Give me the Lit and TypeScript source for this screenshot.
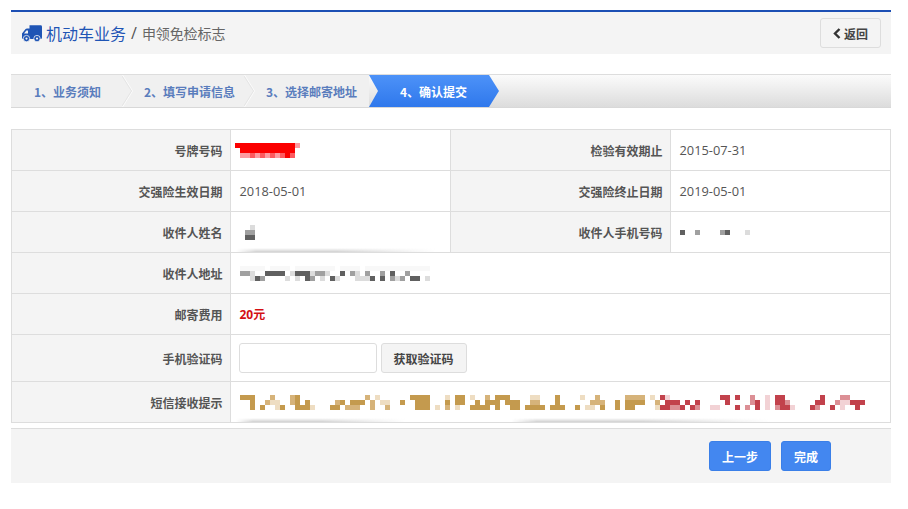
import { LitElement, html, css, svg } from "lit";
import { customElement } from "lit/decorators.js";

const PAL: Record<string, string> = {
  "1": "#c49a4e", "2": "#d6b37a", "3": "#eeddc2",
  a: "#c2424c", b: "#dc8f95", c: "#f2d2d5",
  k: "#606060", m: "#a0a0a0", l: "#dcdcdc", f: "#f8f8f8",
  r: "#fb0000", p: "#fd9aa0", q: "#fd5a5f",
};

function mosaic(rows: string[], extra = "") {
  const w = Math.max(...rows.map((r) => r.length)) * 5;
  const h = rows.length * 5;
  return html`<svg class="mosaic ${extra}" width=${w} height=${h} viewBox="0 0 ${w} ${h}" shape-rendering="crispEdges">
    ${rows.map((r, y) =>
      [...r].map((ch, x) =>
        PAL[ch] ? svg`<rect x=${x * 5} y=${y * 5} width="5" height="5" fill=${PAL[ch]}></rect>` : null
      )
    )}
  </svg>`;
}

const PLATE = ["rrrrrrrrrrrrp", ".rrrrrrrrrrr.", ".lpqpqpqpqrq."].map((s) => s.replace(/l/g, "p"));
const NAME = [".l", "mm", "kk"];
const PHONE = ["k..m....mk...l"];
const ADDRESS = [
  "fffff.ffff.ffffffff.ffff.fffffffffffff",
  "mml..kkkk.lkkklmml..k.ml.m..m.k..m",
  "..lkm....l.l.km.l.kl...lllk.k.mlm.kk.l",
];
const TIP = [
  "111...2...21.............2.3......1111...3" +
    ".11.3..2.111....33...1....3..2.....2222.3.a" +
    "c..........aa.a..b..c.aa.......a...bb",
  "..1..233..21.1.....21.111.2.33..1..111...1" +
    ".11..1.111.111..22...1......222..1.1111..2." +
    "aaa.a.a.....a....ba.c.aab.....aa..bccaaa",
  "..1.1..31..1113...11.222..2..2.....111.3.2" +
    ".3..1111.1..11.1111.111..1.33.1..1.11....3a" +
    "abba.ab..cc...a.b.a.c.baac...ab..a.c..a",
];

const STEPS = ["1、业务须知", "2、填写申请信息", "3、选择邮寄地址"];

@customElement("app-root")
export class AppRoot extends LitElement {
  static styles = css`
    :host {
      display: block;
      width: 908px;
      height: 509px;
      box-sizing: border-box;
      padding: 10px 17px 0 11px;
      background: #fff;
      font-family: "Noto Sans CJK SC", "Open Sans", sans-serif;
      font-size: 12px;
      color: #555;
    }
    .head {
      height: 42px;
      border-top: 2px solid #1c4fb4;
      background: #f4f4f4;
      display: flex;
      align-items: center;
      padding: 0 10px 0 11px;
    }
    .truck { display: block; margin-right: 4px; }
    .title { font-size: 16px; color: #1f55b5; line-height: 20px; }
    .slash { font-size: 16px; color: #555; margin: 0 5px; font-family: "Open Sans", sans-serif; }
    .sub { font-size: 14px; color: #666; letter-spacing: -0.1px; }
    .back {
      margin-left: auto;
      width: 61px;
      height: 30px;
      box-sizing: border-box;
      border: 1px solid #ddd;
      border-radius: 3px;
      background: #f4f4f4;
      display: flex;
      align-items: center;
      justify-content: center;
      gap: 3px;
      font-size: 12px;
      font-weight: 700;
      color: #444;
      padding: 0;
      font-family: inherit;
    }
    .steps {
      margin-top: 20px;
      height: 32px;
      border-top: 1px solid #ddd;
      border-bottom: 1px solid #d8d8d8;
      display: flex;
      background: linear-gradient(#fbfbfb, #dcdcdc);
    }
    .step {
      position: relative;
      box-sizing: border-box;
      background: #f0f0f0;
      color: #5a7dbd;
      font-weight: 700;
      line-height: 34px;
      height: 32px;
      padding-left: 23px;
      width: 112px;
    }
    .step:nth-child(2) { width: 122px; padding-left: 21px; }
    .step:nth-child(3) { width: 124px; padding-left: 21px; }
    .sep { position: absolute; right: -10px; top: 0; z-index: 1; }
    .active {
      width: 130px;
      height: 32px;
      padding-left: 31px;
      line-height: 34px;
      box-sizing: border-box;
      color: #fff;
      font-weight: 700;
      background: linear-gradient(#4d92f8, #2f78ec);
      clip-path: polygon(0 0, 120px 0, 130px 50%, 120px 100%, 0 100%, 9px 50%);
      z-index: 2;
    }
    .steps .tail { flex: 1; }
    table {
      margin-top: 21px;
      width: 879px;
      border-collapse: collapse;
      table-layout: fixed;
      border: 1px solid #ddd;
    }
    col.c1 { width: 218.5px; }
    col.c2, col.c3 { width: 220px; }
    col.c4 { width: 220.5px; }
    tr { height: 41px; }
    tr.tall { height: 47px; }
    td, th { border: 1px solid #ddd; padding: 0; position: relative; }
    th {
      background: #f4f4f4;
      text-align: right;
      padding-right: 7px;
      font-weight: 700;
      color: #555;
      font-size: 12px;
    }
    td { padding-left: 9px; font-family: "Open Sans", "Noto Sans CJK SC", sans-serif; font-size: 12.8px; color: #555; }
    .mosaic { display: block; }
    .plate { margin-left: -5px; }
    .name { margin-left: 5px; }
    .phone { margin-top: 1px; }
    .tip { margin-top: 1px; }
    .fee { color: #d40f14; font-weight: 700; font-size: 12px; font-family: "Open Sans", "Noto Sans CJK SC", sans-serif; }
    .code { display: flex; align-items: center; gap: 4px; margin-left: -1px; }
    .code input {
      width: 138px;
      height: 30px;
      box-sizing: border-box;
      border: 1px solid #ddd;
      border-radius: 3px;
      background: #fff;
      margin: 0;
      padding: 0;
    }
    .code button {
      width: 86px;
      height: 30px;
      box-sizing: border-box;
      border: 1px solid #ddd;
      border-radius: 3px;
      background: #f4f4f4;
      color: #444;
      font-weight: 700;
      font-size: 12px;
      padding: 0;
      font-family: "Noto Sans CJK SC", sans-serif;
    }
    .smudge {
      position: absolute;
      bottom: 0;
      height: 4px;
      background: linear-gradient(transparent, #d0d0d0);
      -webkit-mask-image: linear-gradient(to right, transparent, #000 10%, #000 50%, transparent);
      mask-image: linear-gradient(to right, transparent, #000 10%, #000 50%, transparent);
    }
    .foot {
      box-sizing: border-box;
      margin-top: 5px;
      height: 55px;
      border-top: 1px solid #ddd;
      background: #f4f4f4;
      display: flex;
      justify-content: flex-end;
      align-items: flex-start;
      gap: 10px;
      padding: 12px 60px 0 0;
    }
    .foot button {
      height: 30px;
      box-sizing: border-box;
      border: 1px solid #3a7fe8;
      border-radius: 3px;
      background: #4387f0;
      color: #fff;
      font-weight: 700;
      font-size: 12px;
      padding: 0;
      font-family: "Noto Sans CJK SC", sans-serif;
    }
    .prev { width: 62px; }
    .done { width: 50px; }
  `;

  private smudge(left: number, width: number) {
    return html`<span class="smudge" style="left:${left}px;width:${width}px"></span>`;
  }

  render() {
    return html`
      <div class="head">
        <svg class="truck" width="20" height="17" viewBox="0 0 20 17">
          <path fill="#1f55b5" d="M7.5 0.3H18.6Q20 0.3 20 1.7V12.5Q20 14 18.6 14H1.3Q0 14 0 12.7V8.6L3.6 4Q4.1 3.4 4.9 3.4H7.5Z"></path>
          <path fill="#f4f4f4" d="M2 8.4L4.4 5.4H6V8.4Z"></path>
          <circle cx="4.5" cy="13.6" r="3.2" fill="#1f55b5" stroke="#f4f4f4" stroke-width="0.8"></circle>
          <circle cx="4.5" cy="13.6" r="1.1" fill="#f4f4f4"></circle>
          <circle cx="15" cy="13.6" r="3.2" fill="#1f55b5" stroke="#f4f4f4" stroke-width="0.8"></circle>
          <circle cx="15" cy="13.6" r="1.1" fill="#f4f4f4"></circle>
        </svg>
        <span class="title">机动车业务</span><span class="slash">/</span><span class="sub">申领免检标志</span>
        <button class="back">
          <svg width="8" height="11" viewBox="0 0 8 11"><path d="M6.5 1L2 5.5L6.5 10" fill="none" stroke="#333" stroke-width="2.4"></path></svg>返回
        </button>
      </div>

      <div class="steps">
        ${STEPS.map(
          (s, i) => html`<div class="step">
            ${s}
            ${i < 2
              ? html`<svg class="sep" width="11" height="32" viewBox="0 0 11 32">
                  <path d="M0.5 0L10.5 16L0.5 32" fill="none" stroke="#fbfbfb" stroke-width="1"></path>
                  <path d="M0 1L9.5 16L0 31" fill="none" stroke="#e4e4e4" stroke-width="1"></path>
                </svg>`
              : null}
          </div>`
        )}
        <div class="active">4、确认提交</div>
        <div class="tail"></div>
      </div>

      <table>
        <colgroup><col class="c1" /><col class="c2" /><col class="c3" /><col class="c4" /></colgroup>
        <tr>
          <th>号牌号码</th>
          <td>${mosaic(PLATE, "plate")}</td>
          <th>检验有效期止</th>
          <td>2015-07-31</td>
        </tr>
        <tr>
          <th>交强险生效日期</th>
          <td>2018-05-01</td>
          <th>交强险终止日期</th>
          <td>2019-05-01</td>
        </tr>
        <tr>
          <th>收件人姓名</th>
          <td>${mosaic(NAME, "name")}${this.smudge(5, 200)}</td>
          <th>收件人手机号码</th>
          <td>${mosaic(PHONE, "phone")}</td>
        </tr>
        <tr>
          <th>收件人地址</th>
          <td colspan="3">${mosaic(ADDRESS)}</td>
        </tr>
        <tr>
          <th>邮寄费用</th>
          <td colspan="3"><span class="fee">20元</span></td>
        </tr>
        <tr class="tall">
          <th>手机验证码</th>
          <td colspan="3"><div class="code"><input /><button>获取验证码</button></div></td>
        </tr>
        <tr>
          <th>短信接收提示</th>
          <td colspan="3">${mosaic(TIP, "tip")}${this.smudge(5, 170)}${this.smudge(280, 260)}</td>
        </tr>
      </table>

      <div class="foot">
        <button class="prev">上一步</button>
        <button class="done">完成</button>
      </div>
    `;
  }
}
